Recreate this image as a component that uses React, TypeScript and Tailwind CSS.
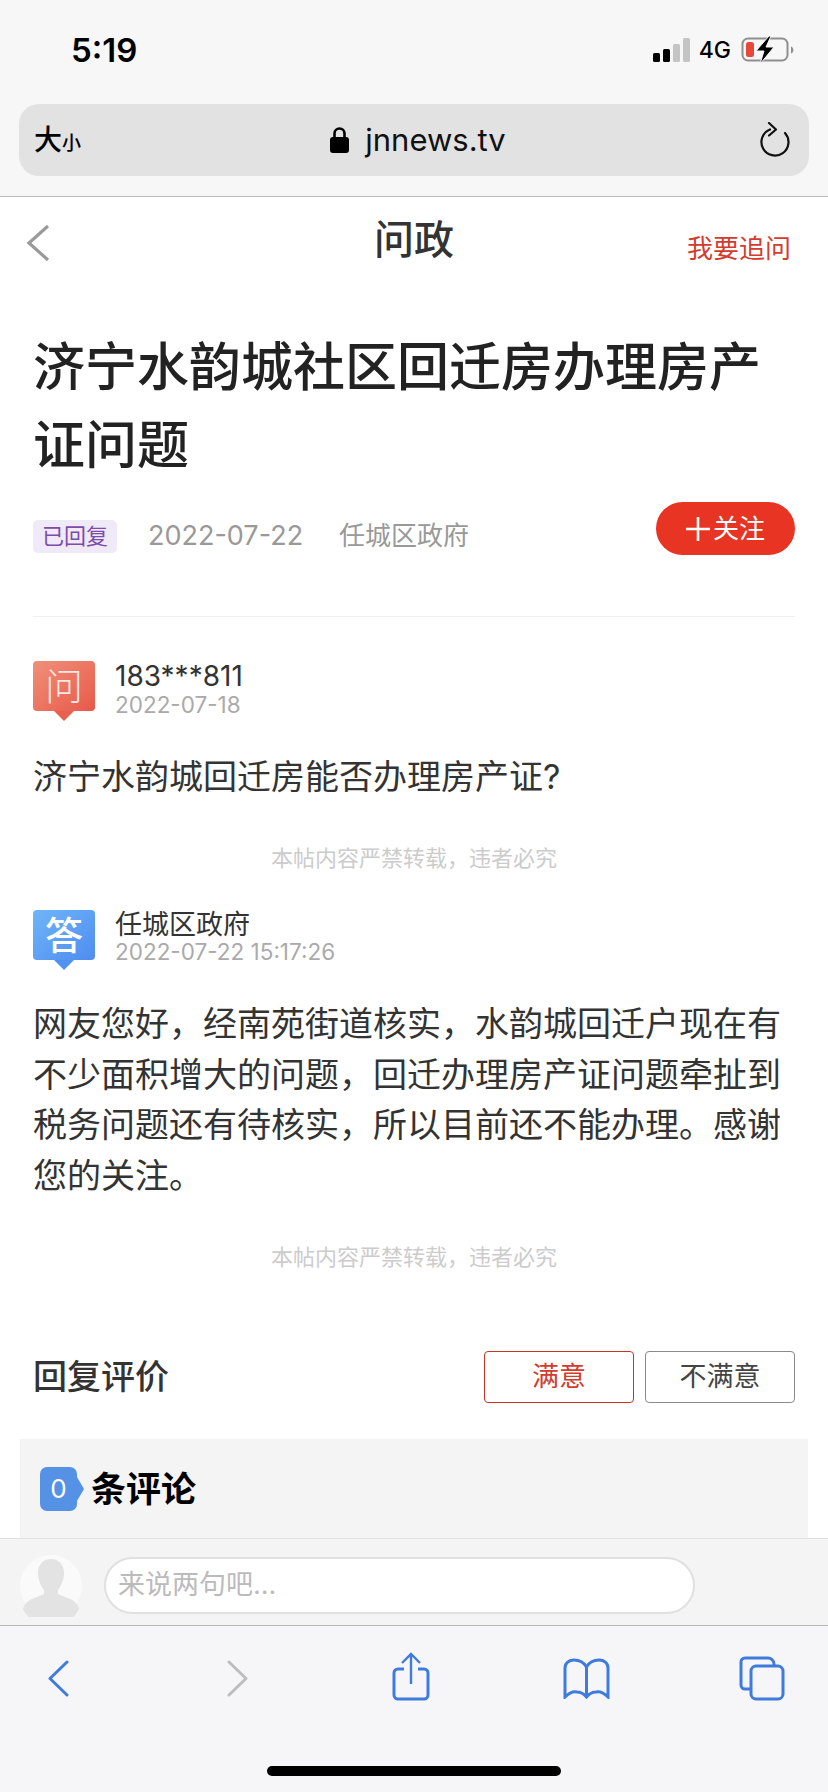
const font = { fontFamily: '"Inter", "Noto Sans CJK SC", "Liberation Sans", sans-serif' };

function StatusBar() {
  return (
    <div className="flex h-[104px] items-start justify-between pl-[71px] pr-[33px] pt-[32px]">
      <span className="text-[33px] font-semibold leading-[36px] text-black">5:19</span>
      <div className="flex items-center pt-[4px]">
        <svg width="38" height="24" viewBox="0 0 38 24" className="mr-[8px]">
          <rect x="0" y="15" width="7" height="9" rx="1.5" fill="#000" />
          <rect x="10" y="11" width="7" height="13" rx="1.5" fill="#000" />
          <rect x="20" y="6" width="7" height="18" rx="1.5" fill="#c4c4c4" />
          <rect x="30" y="0" width="7" height="24" rx="1.5" fill="#c4c4c4" />
        </svg>
        <span className="mr-[10px] text-[23px] font-medium leading-[24px] text-black">4G</span>
        <svg width="54" height="28" viewBox="0 0 54 28">
          <rect x="1.500" y="2.500" width="45" height="22" rx="5.500" fill="none" stroke="#8f8f8f" strokeWidth="2" />
          <rect x="5" y="6" width="8" height="15" rx="2.500" fill="#e8483a" />
          <path d="M50 10.500c1.600.5 2.400 2 2.400 3.500s-.8 3-2.400 3.500z" fill="#8f8f8f" />
          <path d="M28 0 15 15h8l-4 13 14-17h-8l5-11z" fill="#000" stroke="#f7f7f7" strokeWidth="1" />
        </svg>
      </div>
    </div>
  );
}

function UrlBar() {
  return (
    <div className="mx-[19px] flex h-[72px] items-center justify-between rounded-[20px] bg-[#e2e2e2] pl-[15px] pr-[19px]">
      <div className="flex w-[44px] items-baseline whitespace-nowrap font-medium text-black">
        <span className="text-[28px] leading-[32px]">大</span>
        <span className="text-[19px] leading-[20px]">小</span>
      </div>
      <div className="flex items-center gap-[16px]">
        <svg width="19" height="26" viewBox="0 0 19 26">
          <path d="M4.500 11V6.500a5 5 0 0 1 10 0V11" fill="none" stroke="#000" strokeWidth="2.600" />
          <rect x="0" y="10" width="19" height="16" rx="3" fill="#000" />
        </svg>
        <span className="text-[31px] leading-[40px] text-[#111]">jnnews.tv</span>
      </div>
      <svg width="32" height="36" viewBox="0 0 32 36">
        <path d="M12 7.500A13.500 13.500 0 1 0 27 11" fill="none" stroke="#111" strokeWidth="2.200" strokeLinecap="round" />
        <path d="M11 1l7 6.500-7 6" fill="none" stroke="#111" strokeWidth="2.200" strokeLinecap="round" strokeLinejoin="round" />
      </svg>
    </div>
  );
}

function NavBar() {
  return (
    <div className="relative flex h-[80px] items-start justify-between pl-[26px] pr-[37px] pt-[27px]">
      <svg width="24" height="38" viewBox="0 0 24 38">
        <path d="M22 2 3 19l19 17" fill="none" stroke="#9a9a9a" strokeWidth="3.200" />
      </svg>
      <h1 className="absolute left-0 right-0 top-[18px] text-center text-[40px] font-medium leading-[50px] text-[#333]">问政</h1>
      <span className="pt-[11px] text-[26px] leading-[28px] text-[#d33b2f]">我要追问</span>
    </div>
  );
}

function MetaRow() {
  return (
    <div className="mt-[17px] flex items-end justify-between">
      <div className="mb-[2px] flex items-center text-[26px] leading-[34px] text-[#999]">
        <span className="rounded-[5px] bg-[#f0e9f8] px-[9px] py-[1px] text-[22px] leading-[31px] text-[#7d4cab]">已回复</span>
        <span className="ml-[31px] text-[27px]">2022-07-22</span>
        <span className="ml-[36px]">任城区政府</span>
      </div>
      <button className="flex h-[53px] w-[139px] items-center justify-center gap-[3px] rounded-full bg-[#e83423] text-[26px] text-white">
        <svg width="24" height="24" viewBox="0 0 24 24">
          <path d="M12 0v24M0 12h24" fill="none" stroke="#fff" strokeWidth="2.600" />
        </svg>
        关注
      </button>
    </div>
  );
}

function Bubble({ tone, glyph }: { tone: "red" | "blue"; glyph: string }) {
  const red = tone === "red";
  return (
    <div className="flex w-[62px] flex-col items-center">
      <div
        className={
          red
            ? "flex h-[50px] w-[62px] items-center justify-center rounded-[4px] bg-gradient-to-br from-[#ef9079] to-[#e8574a] text-[38px] font-light leading-[50px] text-[#fde8e2]"
            : "flex h-[50px] w-[62px] items-center justify-center rounded-[4px] bg-gradient-to-br from-[#70b5f9] to-[#4f8cf0] text-[38px] font-medium leading-[50px] text-white"
        }
      >
        {glyph}
      </div>
      <div
        className={
          red
            ? "h-0 w-0 border-x-[10px] border-t-[10px] border-x-transparent border-t-[#e9604f]"
            : "h-0 w-0 border-x-[10px] border-t-[10px] border-x-transparent border-t-[#5092f1]"
        }
      />
    </div>
  );
}

function Disclaimer() {
  return <p className="text-center text-[22px] leading-[30px] text-[#cccccc]">本帖内容严禁转载，违者必究</p>;
}

function Chevron({ dir, color }: { dir: "left" | "right"; color: string }) {
  return (
    <svg width="21" height="37" viewBox="0 0 21 37" fill="none" stroke={color} strokeWidth="3" strokeLinecap="round" strokeLinejoin="round">
      <path d={dir === "left" ? "M19 2 2 18.500 19 35" : "M2 2l17 16.500L2 35"} />
    </svg>
  );
}

function ShareIcon() {
  return (
    <svg width="38" height="49" viewBox="0 0 38 49" fill="none" stroke="#3f7bdc" strokeWidth="3">
      <path d="M12 17H6a4 4 0 0 0-4 4v22a4 4 0 0 0 4 4h26a4 4 0 0 0 4-4V21a4 4 0 0 0-4-4h-6" />
      <path d="M19 32V2M10 11l9-9 9 9" strokeWidth="2.400" />
    </svg>
  );
}

function BookIcon() {
  return (
    <svg width="47" height="41" viewBox="0 0 47 41" fill="none" stroke="#3f7bdc" strokeWidth="3">
      <path d="M23.500 9C20 3 15 2 11 2 6 2 2 5 2 10v29c4-4 8-6 12-5 4 0 7 2 9.500 5 2.500-3 5.500-5 9.500-5 4-1 8 1 12 5V10c0-5-4-8-9-8-4 0-9 1-12.500 7z" />
      <path d="M23.500 9v30" />
    </svg>
  );
}

function TabsIcon() {
  return (
    <svg width="46" height="45" viewBox="0 0 46 45" fill="none" stroke="#3f7bdc" strokeWidth="3">
      <path d="M11 33H6a4 4 0 0 1-4-4V6a4 4 0 0 1 4-4h23a6 6 0 0 1 6 6v2" />
      <rect x="12" y="10" width="32" height="33" rx="5" />
    </svg>
  );
}

export default function App() {
  return (
    <div className="flex h-[1792px] w-[828px] flex-col overflow-hidden bg-white" style={font}>
      <header className="h-[197px] shrink-0 border-b border-[#bdbdbd] bg-[#f7f7f7]">
        <StatusBar />
        <UrlBar />
      </header>

      <main className="flex h-[1341px] shrink-0 flex-col overflow-hidden">
        <NavBar />

        <article className="px-[33px]">
          <h2 className="mt-[66px] text-[52px] font-medium leading-[78px] text-[#222]">济宁水韵城社区回迁房办理房产证问题</h2>
          <MetaRow />
          <div className="mt-[61px] h-px bg-[#f0f0f0]" />

          <div className="mt-[44px] flex gap-[20px]">
            <Bubble tone="red" glyph="问" />
            <div>
              <p className="text-[28px] leading-[30px] text-[#333]">183***811</p>
              <p className="mt-[2px] text-[22.500px] leading-[24px] text-[#aaa]">2022-07-18</p>
            </div>
          </div>
          <p className="mt-[34px] text-[34px] leading-[44px] text-[#333]">济宁水韵城回迁房能否办理房产证?</p>
          <div className="mt-[44px]">
            <Disclaimer />
          </div>

          <div className="mt-[37px] flex gap-[20px]">
            <Bubble tone="blue" glyph="答" />
            <div>
              <p className="text-[27px] leading-[30px] text-[#333]">任城区政府</p>
              <p className="text-[22.500px] leading-[24px] text-[#aaa]">2022-07-22 15:17:26</p>
            </div>
          </div>
          <p className="mt-[29px] text-[34px] leading-[50.700px] text-[#333]">
            网友您好，经南苑街道核实，水韵城回迁户现在有不少面积增大的问题，回迁办理房产证问题牵扯到税务问题还有待核实，所以目前还不能办理。感谢您的关注。
          </p>
          <div className="mt-[40px]">
            <Disclaimer />
          </div>

          <div className="mt-[79px] flex items-center justify-between">
            <h3 className="text-[34px] font-medium leading-[52px] text-[#333]">回复评价</h3>
            <div className="flex gap-[11px]">
              <button className="h-[52px] w-[150px] rounded-[4px] border border-[#c9342a] text-[27px] text-[#d33b2f]">满意</button>
              <button className="h-[52px] w-[150px] rounded-[4px] border border-[#8a8a8a] text-[27px] text-[#444]">不满意</button>
            </div>
          </div>
        </article>

        <section className="mx-[20px] mt-[36px] h-[120px] shrink-0 bg-[#f4f4f4] px-[20px] pt-[28px]">
          <div className="flex items-center">
            <div className="relative flex h-[44px] w-[37px] items-center justify-center rounded-[7px] bg-[#5592e6] text-[26px] leading-[30px] text-white">
              0
              <div className="absolute left-full top-[10px] h-0 w-0 border-y-[12px] border-l-[7px] border-y-transparent border-l-[#5592e6]" />
            </div>
            <span className="ml-[14px] text-[35px] font-bold leading-[44px] text-black">条评论</span>
          </div>
        </section>
      </main>

      <div className="flex h-[88px] shrink-0 items-center gap-[22px] border-y border-t-[#e0e0e0] border-b-[#b8b8b8] bg-[#f4f4f4] pl-[20px] pt-[7px]">
        <svg width="62" height="62" viewBox="0 0 62 62">
          <circle cx="31" cy="31" r="31" fill="#fafafa" />
          <path d="M31 4c8 0 13 6 13 14 0 7-3 13-6 17v4l12 5c5 2 8 6 9 10a31 31 0 0 1-56 0c1-4 4-8 9-10l12-5v-4c-3-4-6-10-6-17C18 10 23 4 31 4z" fill="#e3e3e3" />
        </svg>
        <div className="flex h-[57px] w-[591px] items-center rounded-full border-2 border-[#e0e0e0] bg-white pl-[12px] text-[27px] text-[#bbbbbb]">
          来说两句吧...
        </div>
      </div>

      <footer className="flex-1 bg-[#f6f6f8]">
        <div className="flex h-[84px] items-center pl-[48px] pt-[21px]">
          <Chevron dir="left" color="#3f7bdc" />
          <div className="ml-[158px]">
            <Chevron dir="right" color="#bdbdbd" />
          </div>
          <div className="ml-[144px] pb-[4px]">
            <ShareIcon />
          </div>
          <div className="ml-[133px]">
            <BookIcon />
          </div>
          <div className="ml-[129px]">
            <TabsIcon />
          </div>
        </div>
        <div className="mx-auto mt-[56px] h-[10px] w-[294px] rounded-full bg-black" />
      </footer>
    </div>
  );
}
